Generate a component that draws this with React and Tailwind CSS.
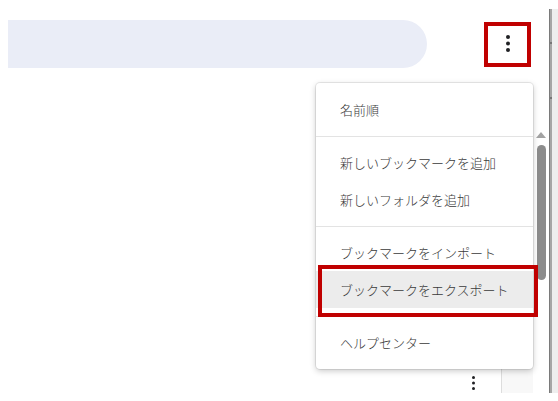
const menuFont = { fontFamily: '"Noto Sans CJK JP", "Noto Sans", sans-serif' };

function Kebab({ size = 4, gap = 6.5, color = "#202124" }) {
  const r = size / 2;
  const h = size + gap * 2;
  return (
    <svg width={size} height={h} viewBox={`0 0 ${size} ${h}`}>
      <circle cx={r} cy={r} r={r} fill={color} />
      <circle cx={r} cy={r + gap} r={r} fill={color} />
      <circle cx={r} cy={r + gap * 2} r={r} fill={color} />
    </svg>
  );
}

function MenuItem({ children, active }) {
  return (
    <div
      className={`h-[37px] pl-6 flex items-center text-[13px] font-light text-[#3a3a3a] ${
        active ? "bg-[#ececec]" : ""
      }`}
    >
      {children}
    </div>
  );
}

function Separator() {
  return (
    <div className="pt-2 pb-[7px]">
      <div className="h-px bg-[#e3e3e3]" />
    </div>
  );
}

export default function App() {
  return (
    <div className="relative w-[558px] h-[401px] overflow-hidden bg-white flex" style={menuFont}>
      {/* main column */}
      <div className="w-[549px] flex flex-col">
        {/* header */}
        <div className="h-[84px] flex items-start">
          <div className="ml-2 mt-5 h-12 w-[419px] rounded-r-full bg-[#eaedf7]" />
          <div className="ml-[57px] mt-[22px] w-[47px] h-[45px] border-4 border-[#c00000] flex items-center justify-center">
            <div className="-mt-[2px]">
              <Kebab />
            </div>
          </div>
        </div>

        {/* list + scrollbar */}
        <div className="mt-[44px] h-[265px] flex">
          <div className="flex-1 flex flex-col justify-end">
            <div className="h-[24px] flex items-center justify-end pr-[26px] pt-[3px]">
              <Kebab size={3} gap={5.5} />
            </div>
          </div>
          <div className="w-[32px] bg-[#f8f8f8] border-l border-[#dddddd]" />
          <div className="w-[16px] flex flex-col items-center">
            <svg width="10" height="6" viewBox="0 0 10 6" className="mt-[4px]">
              <path d="M5 0 L10 6 L0 6 Z" fill="#a3a3a3" />
            </svg>
            <div className="mt-[7px] w-[9px] h-[135px] rounded-full bg-[#8c8c8c]" />
          </div>
        </div>
      </div>

      {/* outer window edge */}
      <div className="w-[9px] flex flex-col">
        <div className="mt-[9px] h-[384px] flex">
          <div className="w-[3px] bg-[#a6a6a6] border-l border-[#7a7a7a] flex flex-col">
            <div className="mt-[33px] h-[2px] bg-[#777]" />
            <div className="mt-[53px] h-[2px] bg-[#777]" />
          </div>
          <div className="flex-1 bg-[#eeeeee]" />
        </div>
      </div>

      {/* popup menu */}
      <div className="absolute left-[316px] top-[83px] w-[217px] py-2 bg-white rounded-[4px] shadow-[0_0_0_1px_rgba(0,0,0,0.08),0_2px_6px_rgba(0,0,0,0.22)]">
        <MenuItem>名前順</MenuItem>
        <Separator />
        <MenuItem>新しいブックマークを追加</MenuItem>
        <MenuItem>新しいフォルダを追加</MenuItem>
        <Separator />
        <MenuItem>ブックマークをインポート</MenuItem>
        <MenuItem active>ブックマークをエクスポート</MenuItem>
        <Separator />
        <MenuItem>ヘルプセンター</MenuItem>
      </div>

      {/* annotation box */}
      <div className="absolute left-[318px] top-[265px] w-[220px] h-[52px] border-4 border-[#c00000]" />
    </div>
  );
}
